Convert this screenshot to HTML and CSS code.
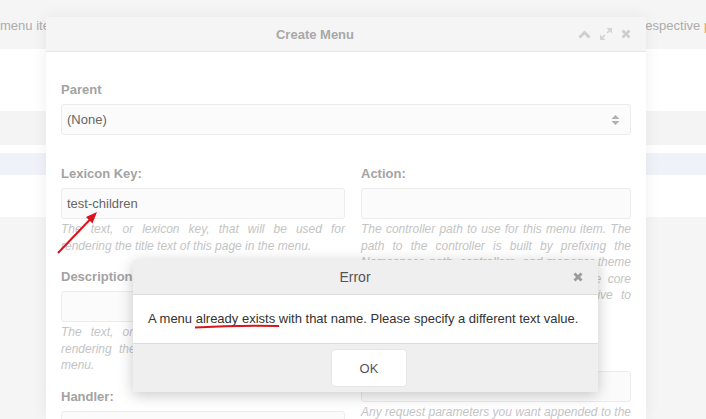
FILE: index.html
```html
<!DOCTYPE html>
<html lang="en">
<head>
    <meta charset="UTF-8">
    <title>Create Menu</title>
    <link rel="stylesheet" href="styles.css">
</head>
<body>
    <!-- pagina de fundo -->
    <div class="page-head">
        <span class="lead-left">menu items</span>
        <span class="lead-right">respective <span class="link">parent</span></span>
    </div>
    <div class="grid">
        <div class="grid-top"></div>
        <div class="grid-head"></div>
        <div class="grid-gap"></div>
        <div class="grid-row selected"></div>
        <div class="grid-row tall"></div>
    </div>

    <!-- janela Create Menu -->
    <div class="modal">
        <div class="modal-head">
            <div class="modal-title">Create Menu</div>
            <div class="modal-tools">
                <svg width="13" height="9" viewBox="0 0 13 9"><polyline points="1.5,7.5 6.5,2.5 11.5,7.5" fill="none" stroke="#cfcfcf" stroke-width="3"/></svg>
                <svg width="12" height="12" viewBox="0 0 12 12">
                    <polygon points="6.5,0 12,0 12,5.5" fill="#d4d4d4"/>
                    <polygon points="0,6.5 0,12 5.5,12" fill="#d4d4d4"/>
                    <line x1="10" y1="2" x2="7" y2="5" stroke="#d4d4d4" stroke-width="1.6"/>
                    <line x1="2" y1="10" x2="5" y2="7" stroke="#d4d4d4" stroke-width="1.6"/>
                </svg>
                <svg width="10" height="10" viewBox="0 0 10 10"><path d="M1.5 1.5 L8.5 8.5 M8.5 1.5 L1.5 8.5" stroke="#cfcfcf" stroke-width="2.8"/></svg>
            </div>
        </div>
        <div class="modal-body">
            <div class="field field-wide">
                <label class="field-label">Parent</label>
                <div class="field-input">
                    <span>(None)</span>
                    <svg class="sort-icon" width="9" height="12" viewBox="0 0 9 12">
                        <polygon points="0.5,5 4.5,1 8.5,5" fill="#b0b0b0"/>
                        <polygon points="0.5,7 4.5,11 8.5,7" fill="#b0b0b0"/>
                    </svg>
                </div>
            </div>
            <div class="cols">
                <div class="col">
                    <div class="field">
                        <label class="field-label">Lexicon Key:</label>
                        <div class="field-input"><span>test-children</span></div>
                        <p class="field-help">The text, or lexicon key, that will be used for rendering the title text of this page in the menu.</p>
                    </div>
                    <div class="field">
                        <label class="field-label">Description:</label>
                        <div class="field-input"></div>
                        <p class="field-help">The text, or lexicon key, that will be used for rendering the description text of this page in the menu.</p>
                    </div>
                    <div class="field">
                        <label class="field-label">Handler:</label>
                        <div class="field-input"></div>
                    </div>
                </div>
                <div class="col">
                    <div class="field">
                        <label class="field-label">Action:</label>
                        <div class="field-input"></div>
                        <p class="field-help">The controller path to use for this menu item. The path to the controller is built by prefixing the Namespace path, controllers, and manager theme directory. If you load a controller from the core namespace, please make this path relative to controllers/default/.</p>
                    </div>
                    <div class="field field-spaced">
                        <label class="field-label">Parameters:</label>
                        <div class="field-input"></div>
                        <p class="field-help">Any request parameters you want appended to the URL for this menu item. Ex: &amp;foo=bar</p>
                    </div>
                </div>
            </div>
        </div>
    </div>

    <!-- alerta de erro -->
    <div class="dialog">
        <div class="dialog-head">
            <div class="dialog-title">Error</div>
            <svg class="dialog-close" width="10" height="10" viewBox="0 0 10 10"><path d="M1.5 1.5 L8.5 8.5 M8.5 1.5 L1.5 8.5" stroke="#9a9a9a" stroke-width="2.8"/></svg>
        </div>
        <div class="dialog-body">A menu already exists with that name. Please specify a different text value.</div>
        <div class="dialog-foot">
            <button class="btn">OK</button>
        </div>
    </div>

    <!-- marcas vermelhas -->
    <svg class="marks" width="706" height="419">
        <line x1="58" y1="253" x2="90" y2="219.5" stroke="#d9141c" stroke-width="2"/>
        <polygon points="97,212 86,217 92.5,223.5" fill="#d9141c"/>
        <path d="M195 327.5 Q237 325 279 326" fill="none" stroke="#d9141c" stroke-width="2"/>
    </svg>
</body>
</html>
```

FILE: styles.css
```css
* {
    box-sizing: border-box;
}

body {
    margin: 0;
    width: 706px;
    height: 419px;
    overflow: hidden;
    position: relative;
    font-family: "Liberation Sans", Arial, sans-serif;
    font-size: 13px;
    color: #555;
    background: #f5f5f5;
}

/* pagina de fundo */
.page-head {
    height: 49px;
    display: flex;
    align-items: center;
    padding-top: 1px;
    color: #acacac;
    white-space: nowrap;
}

.lead-right {
    margin-left: auto;
    width: 65px;
    overflow: hidden;
}

.lead-right .link {
    color: #e0a46c;
}

.grid {
    background: #fff;
}

.grid-top { height: 62px; }
.grid-head { height: 34px; background: #f4f4f4; }
.grid-gap { height: 8px; }
.grid-row { height: 22px; }
.grid-row.selected { background: #eff3f9; }
.grid-row.tall { height: 42px; }

/* janela */
.modal {
    position: absolute;
    left: 46px;
    top: 17px;
    bottom: 0;
    width: 600px;
    background: #fff;
    box-shadow: 0 0 14px rgba(0, 0, 0, 0.07);
}

.modal-head {
    height: 35px;
    display: flex;
    align-items: center;
    background: #f5f5f5;
    border-bottom: 1px solid #e6e6e6;
}

.modal-title {
    flex: 1;
    text-align: center;
    padding-left: 6px;
    font-weight: bold;
    color: #a8a8a8;
}

.modal-tools {
    display: flex;
    align-items: center;
    gap: 9px;
    margin-right: 15px;
}

.modal-tools svg {
    display: block;
}

.modal-body {
    padding: 29px 15px 0;
}

.field {
    margin-bottom: 14px;
}

.field-wide {
    margin-bottom: 30px;
}

.field-spaced {
    margin-top: 28px;
}

.field-label {
    display: block;
    font-weight: bold;
    color: #a3a3a3;
    line-height: 18px;
    margin-bottom: 5px;
}

.field-input {
    height: 31px;
    display: flex;
    align-items: center;
    justify-content: space-between;
    padding: 0 10px 0 5px;
    border: 1px solid #ececec;
    border-radius: 3px;
    background: #fbfbfb;
    color: #666;
}

.field-help {
    margin: 2px 0 0;
    font-size: 12px;
    font-style: italic;
    line-height: 16.5px;
    color: #c4c4c4;
    text-align: justify;
}

.cols {
    display: grid;
    grid-template-columns: 284px 270px;
    column-gap: 16px;
    align-items: start;
}

/* alerta */
.dialog {
    position: absolute;
    left: 133px;
    top: 260px;
    width: 465px;
    background: #efefef;
    box-shadow: 0 3px 14px rgba(0, 0, 0, 0.22);
}

.dialog-head {
    height: 35px;
    display: flex;
    align-items: center;
    border-bottom: 1px solid #dcdcdc;
}

.dialog-title {
    flex: 1;
    text-align: center;
    padding-left: 4px;
    font-size: 14px;
    color: #555;
}

.dialog-close {
    display: block;
    margin-right: 15px;
}

.dialog-body {
    padding: 15px;
    line-height: 18px;
    color: #333;
    background: #fff;
    border-bottom: 1px solid #dcdcdc;
}

.dialog-foot {
    display: flex;
    justify-content: center;
    padding: 5px 0 5px 7px;
}

.btn {
    width: 76px;
    height: 38px;
    border: 1px solid #e6e6e6;
    border-radius: 4px;
    background: #fff;
    font: inherit;
    color: #555;
}

.marks {
    position: absolute;
    left: 0;
    top: 0;
    pointer-events: none;
}
```
